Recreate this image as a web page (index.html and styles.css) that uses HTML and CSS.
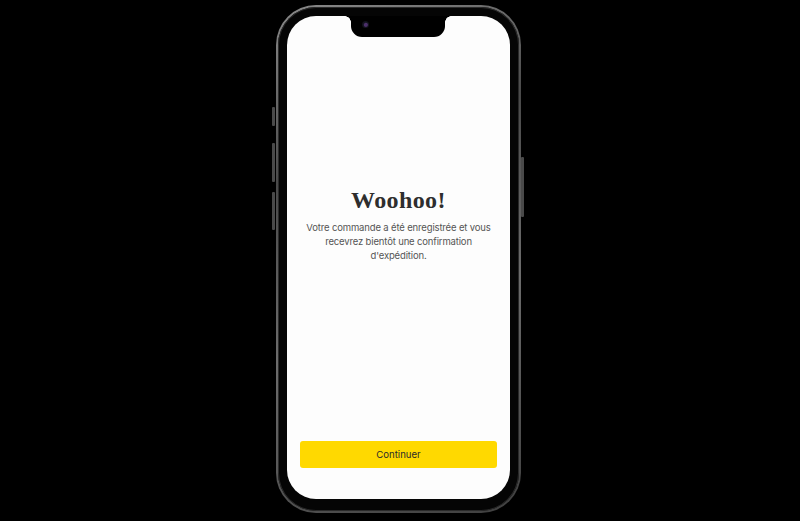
FILE: index.html
```html
<!DOCTYPE html>
<html lang="fr">
<head>
<meta charset="utf-8">
<title>Woohoo!</title>
<link rel="stylesheet" href="styles.css">
</head>
<body>
<div class="stage">
  <div class="phone">
    <span class="btn btn-silent"></span>
    <span class="btn btn-vol-up"></span>
    <span class="btn btn-vol-down"></span>
    <span class="btn btn-power"></span>
    <div class="bezel">
      <div class="screen">
        <div class="notch">
          <span class="speaker"></span>
          <span class="camera"></span>
        </div>
        <main class="content">
          <h1 class="title">Woohoo!</h1>
          <p class="message">Votre commande a été enregistrée et vous recevrez bientôt une confirmation d'expédition.</p>
        </main>
        <div class="actions">
          <button class="continue">Continuer</button>
        </div>
      </div>
    </div>
  </div>
</div>
</body>
</html>
```

FILE: styles.css
```css
html, body {
  margin: 0;
  padding: 0;
  background: #000;
  height: 100%;
}
.stage {
  width: 800px;
  height: 521px;
  box-sizing: border-box;
  padding: 5px 0 0 276px;
}
.phone {
  position: relative;
  width: 245px;
  height: 508px;
  box-sizing: border-box;
  border-radius: 40px;
  padding: 2px;
  background: linear-gradient(160deg, #8a8a8a 0%, #4a4a4a 30%, #6c6c6c 60%, #3f3f3f 100%);
}
.bezel {
  width: 100%;
  height: 100%;
  box-sizing: border-box;
  border-radius: 38px;
  background: #050505;
  padding: 9px 9px 12px;
  box-shadow: inset 0 0 0 1px #2a2a2a;
}
.screen {
  position: relative;
  width: 100%;
  height: 100%;
  box-sizing: border-box;
  border-radius: 29px;
  background: #fdfdfd;
  overflow: hidden;
  display: flex;
  flex-direction: column;
  font-family: Inter, "Noto Sans", sans-serif;
}
.notch {
  position: absolute;
  top: 0;
  left: 64px;
  width: 94px;
  height: 21px;
  background: #000;
  border-radius: 0 0 11px 11px;
}
.notch::before, .notch::after {
  content: "";
  position: absolute;
  top: 0;
  width: 6px;
  height: 6px;
}
.notch::before {
  left: -6px;
  background: radial-gradient(circle at 0 100%, transparent 5.5px, #000 6px);
}
.notch::after {
  right: -6px;
  background: radial-gradient(circle at 100% 100%, transparent 5.5px, #000 6px);
}
.speaker {
  position: absolute;
  top: -5px;
  left: 27px;
  width: 40px;
  height: 3px;
  border-radius: 2px;
  background: #2b2b2b;
}
.camera {
  position: absolute;
  top: 5px;
  left: 11px;
  width: 7px;
  height: 7px;
  border-radius: 50%;
  background: radial-gradient(circle at 55% 55%, #4b2f6a 0 1.5px, #141420 2.5px, #0b0b10 100%);
}
.content {
  flex: 1;
  display: flex;
  flex-direction: column;
  align-items: center;
  justify-content: center;
  padding: 0 10px 10px;
  text-align: center;
}
.title {
  margin: 0 0 5px;
  font-family: "Liberation Serif", "DejaVu Serif", serif;
  font-weight: 700;
  font-size: 24px;
  letter-spacing: 0.4px;
  line-height: 32px;
  color: #2e2e2e;
}
.message {
  margin: 0;
  max-width: 192px;
  font-size: 9.5px;
  letter-spacing: -0.15px;
  line-height: 14px;
  color: #555;
}
.actions {
  padding: 0 13px 31px;
}
.continue {
  display: block;
  width: 100%;
  height: 27px;
  border: none;
  border-radius: 3px;
  background: #ffd900;
  color: #2b2b2b;
  font-family: Inter, "Noto Sans", sans-serif;
  font-size: 9.6px;
  cursor: pointer;
}
.btn {
  position: absolute;
  width: 3px;
  background: #4a4a4a;
  border-radius: 1px;
}
.btn-silent { left: -4px; top: 102px; height: 19px; }
.btn-vol-up { left: -4px; top: 138px; height: 39px; }
.btn-vol-down { left: -4px; top: 187px; height: 38px; }
.btn-power { right: -3px; top: 152px; height: 60px; }
```
